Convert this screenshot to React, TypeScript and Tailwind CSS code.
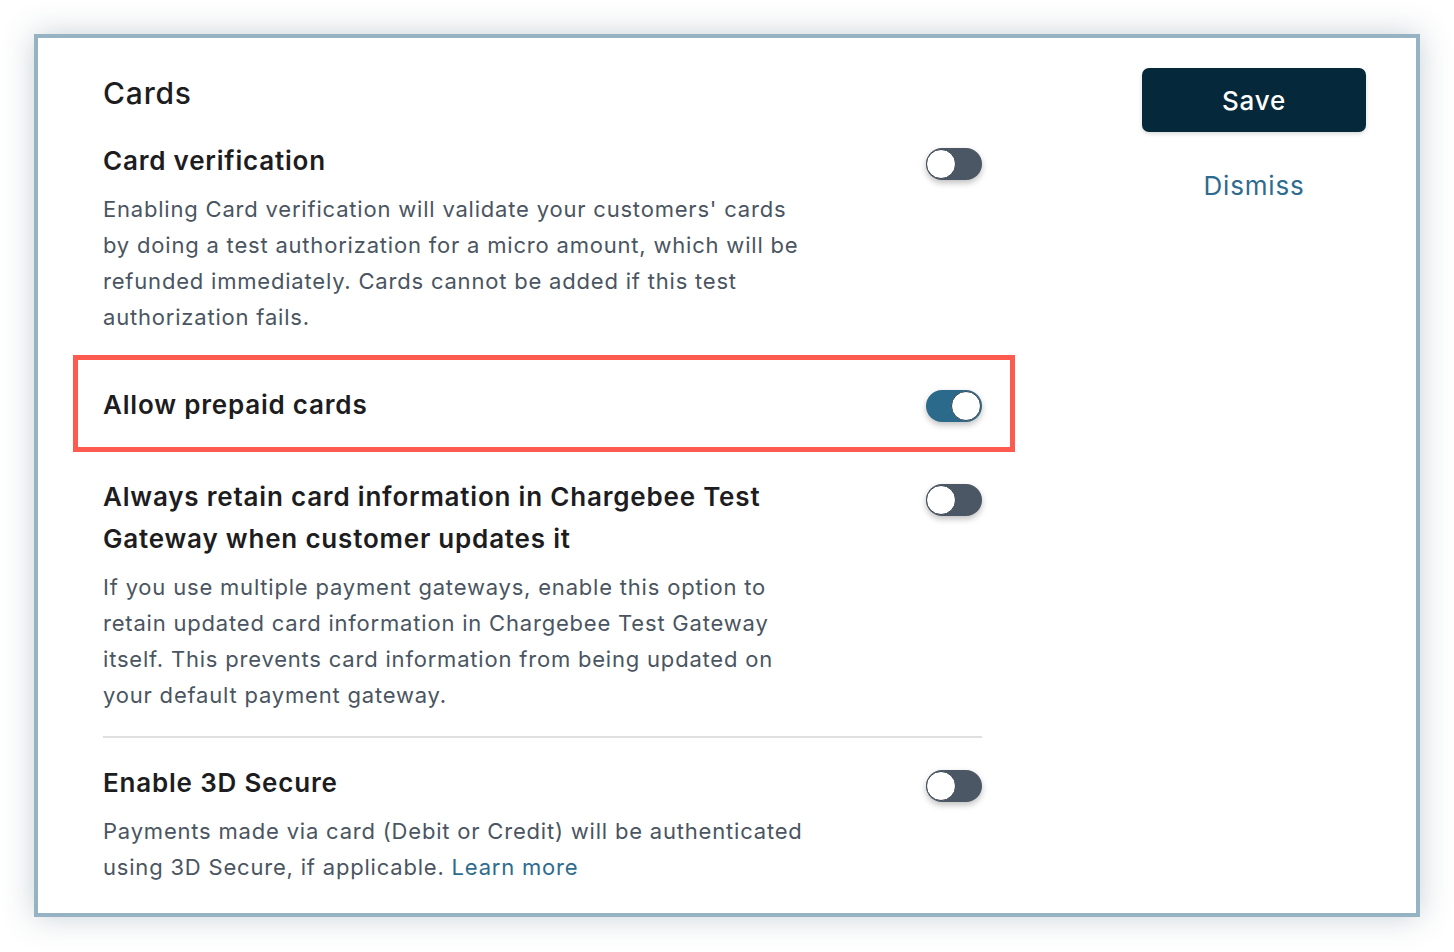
const Toggle = ({ on }: { on?: boolean }) => (
  <div
    className={`relative mt-[5px] h-[32px] w-[56px] shrink-0 rounded-full shadow-[0_3px_6px_rgba(0,0,0,0.25)] ${
      on ? 'bg-[#2c6a8b]' : 'bg-[#4b5765]'
    }`}
  >
    <div
      className={`absolute top-[1px] h-[30px] w-[30px] rounded-full border border-[#3a4552] bg-white ${
        on ? 'right-[1px]' : 'left-0'
      }`}
    />
  </div>
);

const Row = ({
  title,
  on,
  children,
}: {
  title: React.ReactNode;
  on?: boolean;
  children?: React.ReactNode;
}) => (
  <div className="flex items-start justify-between">
    <div>
      <h3 className="text-[26px] font-semibold leading-[36px] tracking-[0.8px] text-[#1d1d1f]">
        {title}
      </h3>
      {children}
    </div>
    <Toggle on={on} />
  </div>
);

const Desc = ({ lines, className = '' }: { lines: React.ReactNode[]; className?: string }) => (
  <p className={`text-[22px] leading-[36px] tracking-[0.8px] text-[#4a5561] ${className}`}>
    {lines.map((l, i) => (
      <span key={i} className="block whitespace-nowrap">
        {l}
      </span>
    ))}
  </p>
);

export default function App() {
  return (
    <div
      className="min-h-[952px] w-[1454px] bg-white pl-[34px] pt-[34px]"
      style={{ fontFamily: 'Inter, "Noto Sans", sans-serif' }}
    >
      <div className="flex h-[883px] w-[1386px] border-4 border-[#95b3c3] bg-white pl-[65px] pr-[50px] pt-[30px] shadow-[0_0_30px_rgba(40,70,90,0.25)]">
        <div className="w-[879px]">
          <h2 className="mt-[7px] text-[30px] font-medium leading-[36px] tracking-[0.8px] text-[#1d1d1f]">
            Cards
          </h2>

          <div className="mt-[32px]">
            <Row title="Card verification">
              <Desc
                className="mt-[12px]"
                lines={[
                  "Enabling Card verification will validate your customers' cards",
                  'by doing a test authorization for a micro amount, which will be',
                  'refunded immediately. Cards cannot be added if this test',
                  'authorization fails.',
                ]}
              />
            </Row>
          </div>

          <div className="-ml-[30px] -mr-[33px] mt-[20px] flex h-[97px] items-center justify-between border-[5px] border-[#ff5a4f] pl-[25px] pr-[28px]">
            <h3 className="mt-[2px] text-[26px] font-semibold leading-[36px] tracking-[0.8px] text-[#1d1d1f]">
              Allow prepaid cards
            </h3>
            <div className="-mt-[1px]">
              <Toggle on />
            </div>
          </div>

          <div className="mt-[24px]">
            <div className="flex items-start justify-between">
              <div>
                <h3 className="text-[26px] font-semibold leading-[42px] tracking-[0.8px] text-[#1d1d1f]">
                  <span className="block whitespace-nowrap">Always retain card information in Chargebee Test</span>
                  <span className="block whitespace-nowrap">Gateway when customer updates it</span>
                </h3>
                <Desc
                  className="mt-[9px]"
                  lines={[
                    'If you use multiple payment gateways, enable this option to',
                    'retain updated card information in Chargebee Test Gateway',
                    'itself. This prevents card information from being updated on',
                    'your default payment gateway.',
                  ]}
                />
              </div>
              <div className="mt-[3px]">
                <Toggle />
              </div>
            </div>
          </div>

          <div className="mt-[23px] h-[2px] bg-[#e0e0e0]" />

          <div className="mt-[27px]">
            <Row title="Enable 3D Secure">
              <Desc
                className="mt-[12px]"
                lines={[
                  'Payments made via card (Debit or Credit) will be authenticated',
                  <>
                    using 3D Secure, if applicable.{' '}
                    <span className="text-[#2d6b8f]">Learn more</span>
                  </>,
                ]}
              />
            </Row>
          </div>
        </div>

        <div className="ml-auto flex w-[224px] flex-col items-center">
          <button className="h-[64px] w-[224px] rounded-[7px] bg-[#05293a] text-[26px] font-medium tracking-[0.8px] text-white shadow-[0_2px_4px_rgba(0,0,0,0.15)]">
            Save
          </button>
          <button className="mt-[36px] text-[26px] leading-[36px] tracking-[0.8px] text-[#2d6b8f]">
            Dismiss
          </button>
        </div>
      </div>
    </div>
  );
}
